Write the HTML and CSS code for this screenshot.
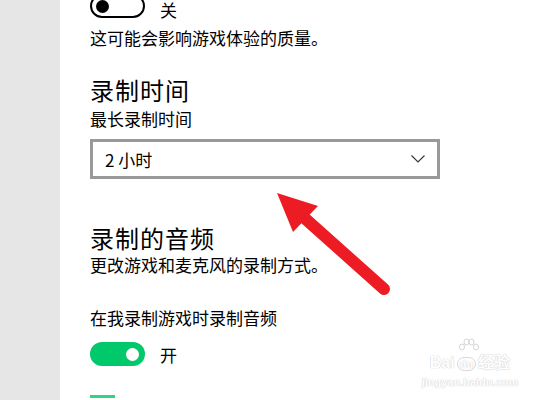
FILE: index.html
```html
<!DOCTYPE html>
<html lang="zh-CN">
<head>
  <meta charset="UTF-8">
  <title>录制设置</title>
  <link rel="stylesheet" href="styles.css">
</head>
<body>

  <div class="page">
    <div class="sidebar"></div>

    <div class="content">
      <div class="toggle-row first">
        <div class="toggle off"><span class="knob"></span></div>
        <span class="toggle-label">关</span>
      </div>
      <p class="desc">这可能会影响游戏体验的质量。</p>

      <h2 class="section-title">录制时间</h2>
      <p class="sub-label">最长录制时间</p>
      <div class="select">
        <span>2 小时</span>
        <svg class="chevron" width="14" height="8" viewBox="0 0 14 8">
          <polyline points="0.5,0.5 7,7 13.5,0.5" fill="none" stroke="#333" stroke-width="1.1"/>
        </svg>
      </div>

      <h2 class="section-title audio">录制的音频</h2>
      <p class="desc tight">更改游戏和麦克风的录制方式。</p>

      <p class="field-label">在我录制游戏时录制音频</p>
      <div class="toggle-row">
        <div class="toggle on"><span class="knob"></span></div>
        <span class="toggle-label">开</span>
      </div>
      <div class="next-bar"></div>
    </div>
  </div>

  <!-- 红色箭头 -->
  <svg class="arrow" width="550" height="400" viewBox="0 0 550 400">
    <line x1="384" y1="289" x2="300" y2="214" stroke="#ed1c24" stroke-width="12" stroke-linecap="round"/>
    <polygon points="277,193 318,206 293,232" fill="#ed1c24"/>
  </svg>

  <div class="watermark">
    <svg class="wm-paw" width="22" height="18" viewBox="0 0 22 18">
      <g fill="#fff" stroke="#d0d0d0" stroke-width="1">
        <ellipse cx="4" cy="9" rx="2.5" ry="3"/>
        <ellipse cx="8.5" cy="4" rx="2.5" ry="3"/>
        <ellipse cx="13.5" cy="4" rx="2.5" ry="3"/>
        <ellipse cx="18" cy="9" rx="2.5" ry="3"/>
      </g>
    </svg>
    <div class="wm-top">Bai<span class="wm-du">du</span>经验</div>
    <div class="wm-url">jingyan.baidu.com</div>
  </div>

</body>
</html>
```

FILE: styles.css
```css
body {
  margin: 0;
  font-family: "Noto Sans CJK SC", "Noto Sans", sans-serif;
  color: #000;
  background: #fff;
  overflow: hidden;
}
.page {
  display: flex;
  width: 550px;
  height: 400px;
  overflow: hidden;
}
.sidebar {
  width: 60px;
  flex-shrink: 0;
  background: #e6e6e6;
}
.content {
  flex: 1;
  padding-left: 30px;
}
p {
  margin: 0;
}
.toggle-row {
  display: flex;
  align-items: center;
  height: 24px;
}
.toggle-row.first {
  margin-top: -6px;
}
.toggle-row.first .toggle-label {
  line-height: 17px;
  margin-top: 6px;
}
.toggle {
  box-sizing: border-box;
  width: 55px;
  height: 24px;
  border-radius: 12px;
  display: flex;
  align-items: center;
}
.toggle.off {
  border: 2px solid #000;
  padding-left: 4px;
}
.toggle.off .knob {
  width: 13px;
  height: 13px;
  border-radius: 50%;
  background: #000;
}
.toggle.on {
  background: #00c96b;
  justify-content: flex-end;
  padding-right: 6px;
}
.toggle.on .knob {
  width: 13px;
  height: 13px;
  border-radius: 50%;
  background: #fff;
}
.toggle-label {
  margin-left: 15px;
  font-size: 17px;
}
.desc {
  font-size: 17px;
  line-height: 22px;
  margin-top: 9px;
}
.desc.tight {
  margin-top: 0;
}
.section-title {
  font-weight: normal;
  font-size: 24px;
  letter-spacing: 1px;
  line-height: 32px;
  margin: 25px 0 0;
}
.section-title.audio {
  margin-top: 43px;
}
.sub-label {
  font-size: 17px;
  line-height: 22px;
  margin-top: 2px;
}
.select {
  box-sizing: border-box;
  width: 350px;
  height: 40px;
  margin-top: 9px;
  border: 3px solid #999;
  display: flex;
  align-items: center;
  justify-content: space-between;
  padding: 0 12px 0 12px;
  font-size: 17px;
}
.field-label {
  font-size: 17px;
  line-height: 22px;
  margin-top: 31px;
}
.toggle-row + .next-bar {
  margin-top: 29px;
}
.field-label + .toggle-row {
  margin-top: 13px;
}
.next-bar {
  width: 25px;
  height: 3px;
  background: #2fd584;
}
.arrow {
  position: absolute;
  left: 0;
  top: 0;
  pointer-events: none;
}
.watermark {
  position: absolute;
  left: 418px;
  top: 340px;
  width: 104px;
  text-align: center;
  font-family: "Liberation Sans", sans-serif;
  color: #fff;
  text-shadow: 0 0 1px #c8c8c8, 0 0 1px #c8c8c8;
  opacity: 0.9;
}
.wm-paw {
  position: absolute;
  left: 40px;
  top: -2px;
}
.wm-top {
  margin-top: 12px;
  font-size: 16px;
  font-weight: bold;
  line-height: 22px;
  white-space: nowrap;
}
.wm-du {
  font-size: 11px;
  border: 1px solid #d4d4d4;
  border-radius: 7px;
  padding: 0 2px;
  margin: 0 2px;
}
.wm-url {
  font-size: 11px;
  font-weight: bold;
  line-height: 14px;
}
```
